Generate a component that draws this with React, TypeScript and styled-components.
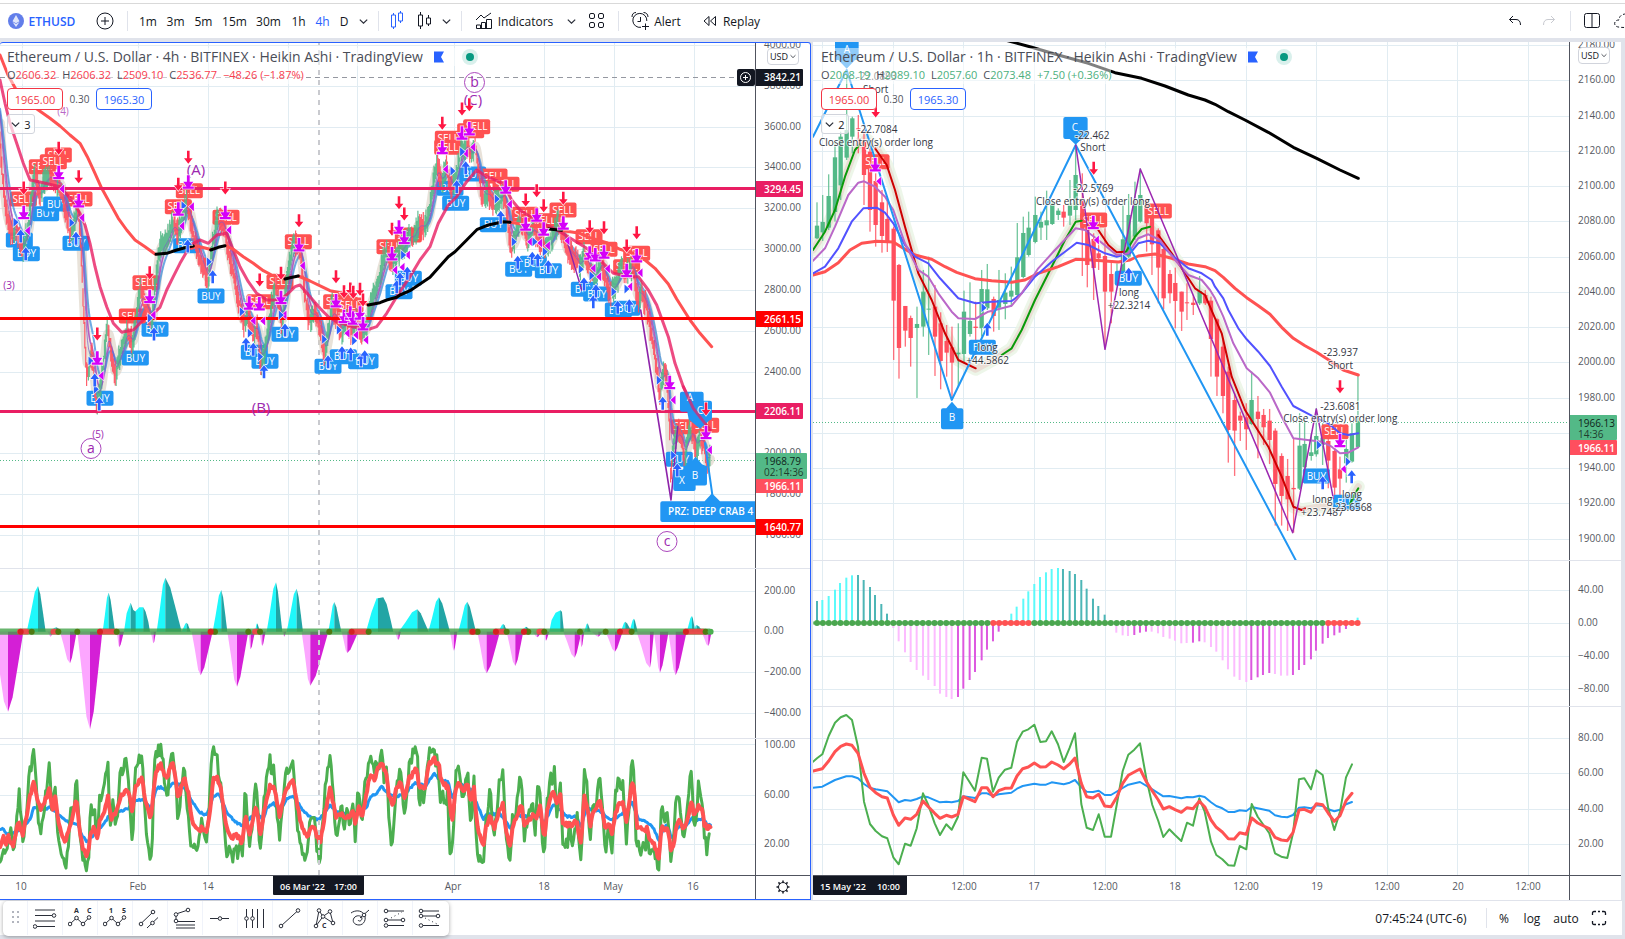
import React from 'react';
import styled, { createGlobalStyle, css } from 'styled-components';

const font = '"Open Sans", "Noto Sans", sans-serif';

const GlobalStyle = createGlobalStyle`
  * { box-sizing: border-box; }
  body { margin: 0; background: #e0e3eb; font-family: ${font}; color: #131722; overflow: hidden; }
  button { font: inherit; color: inherit; border: 0; padding: 0; background: none; cursor: pointer; }
`;

/* ---------- page frame ---------- */

const Page = styled.div`
  display: flex;
  flex-direction: column;
  min-height: 100vh;
`;
const TopBar = styled.header`
  display: flex;
  align-items: center;
  height: 38px;
  padding-top: 4px;
  background: linear-gradient(#fff 3px, #d9d9d9 3px, #d9d9d9 4px, #fff 4px);
  font-size: 12px;
  overflow: hidden;
`;
const Tool = styled.button<{ $w: number; $active?: boolean; $strong?: boolean }>`
  display: flex;
  align-items: center;
  justify-content: center;
  flex: none;
  width: ${p => p.$w}px;
  height: 32px;
  white-space: nowrap;
  color: ${p => (p.$active ? '#2962ff' : '#131722')};
  font-weight: ${p => (p.$strong ? 600 : 400)};
  gap: 5px;
`;
const Divider = styled.span`
  flex: none;
  width: 1px;
  height: 20px;
  background: #e0e3eb;
`;
const Spacer = styled.span`
  flex: 1;
`;
const History = styled.span`
  display: flex;
  padding-right: 4px;
`;
const Workspace = styled.main`
  display: grid;
  grid-template-columns: 811fr 808fr;
  gap: 2px;
  flex: 1;
  padding: 4px 4px 0 0;
  min-height: 0;
`;
const ChartPanel = styled.section<{ $selected?: boolean }>`
  position: relative;
  display: flex;
  flex-direction: column;
  min-width: 0;
  background: #fff;
  overflow: hidden;
  ${p => p.$selected && css`
    border: 1px solid #2962ff;
    border-left: 0;
    border-radius: 3px 3px 0 0;
  `}
`;
const PaneRow = styled.div<{ $grow: number; $last?: boolean }>`
  display: flex;
  flex: ${p => p.$grow} ${p => p.$grow} 0;
  min-height: 0;
  border-bottom: ${p => (p.$last ? '0' : '1px solid #e0e3eb')};
`;
const TimeRow = styled.div<{ $h: number }>`
  display: flex;
  flex: none;
  height: ${p => p.$h}px;
  border-top: 1px solid #50535e;
`;
const Plot = styled.svg`
  display: block;
  flex: 1;
  min-width: 0;
  height: 100%;
`;
const Axis = styled.svg<{ $w: number }>`
  display: block;
  flex: none;
  width: ${p => p.$w}px;
  height: 100%;
  border-left: 1px solid #50535e;
`;
const AxisText = styled.text`
  font-family: ${font};
  font-size: 10px;
  fill: #555861;
`;
const TagText = styled.text<{ $small?: boolean; $light?: boolean }>`
  font-family: ${font};
  font-size: ${p => (p.$small ? 9 : 10)}px;
  font-weight: ${p => (p.$light ? 400 : 600)};
`;
const BadgeText = styled.text`
  font-family: ${font};
  font-size: 10px;
  fill: #fff;
  text-anchor: middle;
`;
const ZoneText = styled.text`
  font-family: ${font};
  font-size: 10px;
  font-weight: 600;
  fill: #fff;
`;
const NoteText = styled.text`
  font-family: ${font};
  font-size: 10px;
  fill: #33363f;
  text-anchor: middle;
  stroke: #ffffffb0;
  stroke-width: 2px;
  paint-order: stroke;
`;
const WaveText = styled.text<{ $size: number }>`
  font-family: ${font};
  font-size: ${p => p.$size}px;
  fill: #9c27b0;
  text-anchor: middle;
`;

/* ---------- legend over the chart ---------- */

const Legend = styled.div<{ $inset: number }>`
  position: absolute;
  top: ${p => p.$inset - 2}px;
  left: ${p => p.$inset}px;
  display: flex;
  flex-direction: column;
  align-items: flex-start;
`;
const LegendRow = styled.div`
  display: flex;
  align-items: center;
  height: 18px;
  background: #ffffff80;
  white-space: nowrap;
`;
const Title = styled.h2`
  margin: 0;
  font-size: 14px;
  font-weight: 400;
  line-height: 18px;
  color: #4a4d57;
`;
const Values = styled.p<{ $up?: boolean }>`
  display: flex;
  gap: 6px;
  margin: 0;
  font-size: 11px;
  line-height: 16px;
  color: ${p => (p.$up ? '#4caf7d' : '#f7404f')};
  b { font-weight: 400; color: #4a4d57; }
`;
const Quotes = styled.div`
  display: flex;
  align-items: center;
  height: 22px;
  margin-top: 4px;
  font-size: 10px;
  color: #50535e;
`;
const Quote = styled.button<{ $buy?: boolean }>`
  width: 56px;
  height: 22px;
  border: 1px solid currentColor;
  border-radius: 4px;
  background: #fff;
  font-size: 11px;
  color: ${p => (p.$buy ? '#2962ff' : '#f23645')};
`;
const Spread = styled.span`
  width: 33px;
  text-align: center;
`;
const Collapse = styled.button`
  display: flex;
  align-items: center;
  justify-content: center;
  gap: 4px;
  width: 28px;
  height: 20px;
  margin-top: 4px;
  border: 1px solid #d1d4dc;
  border-radius: 3px;
  background: #ffffffb0;
  font-size: 11px;
`;
const Currency = styled.button`
  position: absolute;
  top: 5px;
  right: 11px;
  display: flex;
  align-items: center;
  justify-content: center;
  gap: 2px;
  width: 32px;
  height: 17px;
  border: 1px solid #d1d4dc;
  border-radius: 4px;
  background: #fff;
  font-size: 9px;
`;
const FlagSlot = styled.span`
  display: flex;
  align-items: center;
  gap: 18px;
  margin-left: 11px;
`;

/* ---------- footer ---------- */

const Footer = styled.footer`
  display: flex;
  align-items: center;
  justify-content: space-between;
  height: 35px;
  margin: 0 3px 4px 0;
  padding: 0 13px 0 3px;
  background: #fff;
  border-top: 1px solid #e0e3eb;
  font-size: 12px;
`;
const DrawingBar = styled.div`
  display: flex;
  align-items: center;
  height: 35px;
  padding: 0 2px 0 1px;
  background: #fff;
  border-radius: 5px;
  box-shadow: 0 1px 4px #00000059;
`;
const Grip = styled.span`
  display: flex;
  justify-content: center;
  width: 23px;
`;
const DrawTool = styled.button`
  display: flex;
  align-items: center;
  justify-content: center;
  width: 35px;
  height: 34px;
  border-left: 1px solid #f0f3fa;
`;
const Status = styled.div`
  display: flex;
  align-items: center;
`;

/* ---------- geometry helpers ---------- */

type Pt = [number, number];

// Traces are kept on a grid of three units to the pixel, from the origin of their section.
const trace = (ox: number, oy: number, data: string): Pt[] =>
  data.trim().split(/\s+/).map(s => {
    const [x, y] = s.split(',').map(Number);
    return [ox + x / 3, oy + y / 3] as Pt;
  });
const A = (d: string) => trace(0, 100, d);
const B = (d: string) => trace(400, 60, d);
const C = (d: string) => trace(805, 40, d);
const D = (d: string) => trace(1215, 40, d);
const E = (d: string) => trace(0, 560, d);
const F = (d: string) => trace(400, 560, d);
const G = (d: string) => trace(805, 550, d);
const H = (d: string) => trace(1215, 550, d);

const str = (p: Pt[]) => p.map(q => q[0].toFixed(1) + ',' + q[1].toFixed(1)).join(' ');

const Line = ({ p, c, w, o = 1 }: { p: Pt[]; c: string; w: number; o?: number }) => (
  <polyline points={str(p)} fill="none" stroke={c} strokeWidth={w} opacity={o} strokeLinejoin="round" strokeLinecap="round" />
);

const Badges = ({ at, kind }: { at: Pt[]; kind: 'SELL' | 'BUY' }) => (
  <>
    {at.map(([x, y], i) => (
      <g key={i}>
        <rect x={x - 13.5} y={y - 7.5} width={27} height={15} rx={2} fill={kind === 'SELL' ? '#ff5252' : '#2196f3'} />
        <BadgeText x={x} y={y + 3.5}>{kind}</BadgeText>
      </g>
    ))}
  </>
);

const shapes = {
  down: { d: 'M-1.300-6.500H1.300V1H4.300L0 6.500L-4.300 1H-1.300Z', c: '#ff1744' },
  exit: { d: 'M-1.400-7H1.400V-.5H5L1.800 4.200H5.500V6.500H-5.500V4.200H-1.800L-5-.5H-1.400Z', c: '#d500f9' },
  up: { d: 'M-1.300 6.500H1.300V-1H4.300L0-6.500L-4.300-1H-1.300Z', c: '#2962ff' },
  left: { d: 'M-2.800 0L2.200-4.500V4.500Z', c: '#d500f9' },
  right: { d: 'M2.800 0L-2.200-4.500V4.500Z', c: '#2962ff' },
};
const Marks = ({ at, kind }: { at: Pt[]; kind: keyof typeof shapes }) => (
  <>
    {at.map(([x, y], i) => (
      <path key={i} d={shapes[kind].d} transform={`translate(${x.toFixed(1)} ${y.toFixed(1)})`} fill={shapes[kind].c} stroke="#fff" strokeWidth={1.4} paintOrder="stroke" strokeOpacity={0.85} />
    ))}
  </>
);

const Grid = ({ xs, ys }: { xs: number[]; ys: number[] }) => (
  <g stroke="#e1ecf2" strokeWidth={1}>
    {xs.map(x => <line key={'x' + x} x1={x + 0.5} x2={x + 0.5} y1={0} y2={2000} />)}
    {ys.map(y => <line key={'y' + y} x1={0} x2={3000} y1={y + 0.5} y2={y + 0.5} />)}
  </g>
);

const Labels = ({ x, items }: { x: number; items: [string, number][] }) => (
  <>{items.map(([t, y]) => <AxisText key={t} x={x} y={Math.round(y) + 3}>{t}</AxisText>)}</>
);

const Tag = ({ x, y, w = 48, h = 16, fill, text, ink = '#fff', sub }: { x: number; y: number; w?: number; h?: number; fill: string; text: string; ink?: string; sub?: string }) => (
  <g>
    <rect x={x} y={y} width={w} height={h} rx={1} fill={fill} />
    <TagText x={x + 9} y={y + 12} fill={ink} $light={ink !== '#fff'}>{text}</TagText>
    {sub && <TagText x={x + 9} y={y + 23} fill="#1f3d2e" $light>{sub}</TagText>}
  </g>
);

/* ---------- 4h chart data ---------- */

const L_XS = [22, 138, 208, 288, 357, 454, 544, 614, 694];
const L_PRICES: [string, number][] = Array.from({ length: 13 }, (_, i) => [(4000 - i * 200) + '.00', 45 + i * 40.83]);

const price4h: Pt[] = [
  ...A('0,130 10,260 20,350 35,400 50,390 70,450 85,380 95,280 105,210 120,280 135,240 150,225 165,250 180,250 195,330 210,390 225,370 235,310 243,450 250,620 260,820 275,760 290,920 305,840 322,680 335,760 345,830 358,770 380,690 398,730 420,570 440,620 455,670 465,560 480,440 500,420 520,370 535,400 550,340 562,300 575,380 590,450 605,490 625,540 640,420 652,350 670,370 685,450 700,520 715,600 730,670 745,640 760,700 772,680 782,800 800,720 815,610 830,560 845,680 860,540 880,430 900,440 915,580 925,660 945,640 960,680 975,770 985,700 995,610 1010,660 1025,700 1040,650 1055,700 1070,660 1085,710 1100,680 1115,600 1130,570 1145,500 1160,450 1178,490 1195,460 1215,430 1235,400'),
  ...B('40,535 55,490 75,500 88,460 100,370 112,310 125,370 140,320 155,390 168,360 180,280 200,250 215,290 225,250 235,330 248,420 265,400 280,430 300,410 315,400 325,500 335,570 350,520 365,480 380,540 400,500 420,550 435,570 455,540 475,480 488,520 500,570 520,590 540,620 555,580 575,650 590,640 605,600 620,670 632,700 650,670 665,620 680,640 700,610 712,720 725,700 740,740 755,830 770,920 780,1000 790,930 800,960 808,1060 812,1250 822,1150 835,1110 848,1150 855,1200 865,1120 878,1110 888,1170 900,1130 912,1150 922,1220 930,1190'),
];

const hash = (n: number) => { const s = Math.sin(n * 127.1 + 11.7) * 43758.5453; return s - Math.floor(s); };
const sample = (p: Pt[], step: number): Pt[] => {
  const out: Pt[] = [];
  let k = 0;
  for (let x = p[0][0]; x < p[p.length - 1][0]; x += step) {
    while (k < p.length - 2 && p[k + 1][0] < x) k++;
    const t = (x - p[k][0]) / (p[k + 1][0] - p[k][0]);
    out.push([x, p[k][1] + t * (p[k + 1][1] - p[k][1])]);
  }
  return out;
};
const jitter = (p: Pt[], amp: number): Pt[] => sample(p, 1.2).map(([x, y], i) => [x, y + (hash(i + 40) - 0.5) * amp]);
const bars4h = sample(price4h, 0.893);
const ema = (p: Pt[], n: number): Pt[] => { let v = p[0][1] - 40; return p.map(([x, y]) => { v += (y - v) * (2 / (n + 1)); return [x, v] as Pt; }); };
const sticks = (red: boolean) => bars4h.map(([x, y], i) => {
  const next = bars4h[Math.min(i + 2, bars4h.length - 1)][1];
  const prev = bars4h[Math.max(i - 2, 0)][1];
  if ((next > prev) !== red) return '';
  const up = 4 + hash(i) * 11;
  const dn = 4 + hash(i + 900) * 11;
  return `M${x.toFixed(1)} ${(y - up).toFixed(1)}V${(y + dn).toFixed(1)}`;
}).join('');

const histUp = [
  '80,114,137,78', '150,168,185,202', '308,326,345,98', '470,496,545,53', '545,560,572,188', '638,664,682,90', '765,771,780,190', '800,828,847,67', '860,890,909,86', '985,1003,1024,126',
  '1196,1252,1286,148', '1285,1317,1350,112', '1375,1402,1428,125', '1495,1510,1522,192', '1568,1578,1592,200', '1753,1762,1772,190', '1862,1876,1895,185', '1888,1902,1913,176', '2060,2076,2086,168', '2080,2090,2110,195',
];
const histDown = [
  '-20,24,70,455', '143,152,158,230', '180,210,230,310', '232,270,307,508', '350,358,372,262', '452,461,468,250', '575,602,638,346', '682,711,745,380', '745,752,765,268', '778,787,797,258', '848,853,858,230', '905,931,985,377', '1025,1042,1075,279', '1185,1195,1203,240',
  '1350,1362,1372,272', '1432,1460,1500,340', '1520,1546,1570,318', '1598,1612,1625,232', '1632,1638,1648,242', '1690,1724,1745,293', '1738,1745,1753,262', '1775,1795,1808,230', '1817,1845,1868,275', '1910,1950,1962,323', '1962,1980,2006,338', '2005,2027,2060,346', '2105,2125,2135,258',
];
const Hump = ({ s, light, dark }: { s: string; light: string; dark: string }) => {
  const [a, m, b, y] = s.split(',').map(Number);
  const h = y - 215;
  return (
    <>
      <path fill={light} d={`M${a} 215L${a + (m - a) * 0.35} ${215 + h * 0.4}L${a + (m - a) * 0.72} ${215 + h * 0.87}L${m} ${y}V215Z`} />
      <path fill={dark} d={`M${m} 215V${y}L${m + (b - m) * 0.3} ${215 + h * 0.82}L${m + (b - m) * 0.68} ${215 + h * 0.38}L${b} 215Z`} />
    </>
  );
};

const rsi4hGreen = [
  ...E('0,915 8,880 20,890 32,780 42,880 58,695 70,855 80,760 88,640 95,620 102,578 108,660 115,790 122,820 130,770 138,690 148,622 155,740 165,672 172,800 182,870 190,885 197,912 205,860 212,755 222,760 229,610 236,790 245,870 255,915 265,910 272,745 280,750 284,728 290,860 298,725 305,720 312,690 323,590 330,815 338,725 345,795 353,780 360,650 368,635 376,602 385,640 390,760 398,850 405,640 412,605 426,590 432,700 440,840 450,890 456,870 462,620 470,580 482,567 490,600 495,680 502,715 510,600 520,582 528,680 535,800 542,700 551,605 557,690 565,780 572,840 580,850 585,870 593,888 600,800 610,780 618,868 626,770 632,620 640,575 650,568 658,670 666,700 672,800 680,880 688,850 697,908 705,850 715,885 722,860 728,880 735,690 742,770 750,865 757,800 768,635 775,790 781,885 790,750 800,650 810,600 815,650 822,630 830,740 838,840 845,790 852,680 858,612 868,640 878,607 885,700 895,830 905,860 912,880 920,908 928,800 936,760 945,800 952,880 960,905 968,770 980,640 991,590 998,660 1005,800 1012,830 1020,770 1023,715 1032,820 1040,740 1050,790 1060,730 1066,870 1073,690 1080,740 1088,800 1095,640 1105,630 1112,585 1122,640 1128,585 1136,640 1145,580 1152,650 1160,610 1165,740 1174,850 1182,800 1192,650'),
  ...F('4,625 12,785 20,700 28,620 38,580 52,570 58,745 65,680 70,720 78,650 85,600 92,565 101,556 106,620 113,590 120,740 128,690 135,740 143,690 148,860 155,885 160,800 168,640 176,612 187,738 194,680 202,618 212,815 222,660 230,860 240,900 250,918 258,780 265,740 271,685 280,830 290,760 298,660 309,635 318,850 330,908 338,760 345,790 352,715 362,638 374,840 384,770 396,720 406,812 412,690 419,660 426,820 433,895 440,740 452,632 458,680 463,632 469,770 481,650 488,840 495,850 502,855 510,800 516,845 522,840 532,770 543,905 553,640 560,650 569,850 580,740 588,745 594,690 601,655 610,800 617,870 626,770 636,885 645,720 655,638 662,690 668,670 679,850 687,740 696,600 703,640 708,860 716,830 722,880 728,840 736,870 741,790 750,900 758,870 765,890 776,925 785,735 793,800 800,730 808,850 814,905 825,760 835,688 842,760 852,835 862,740 873,620 880,770 887,805 895,675 905,710 912,810 921,882 923,830 931,822'),
];
const rsi4hRed = [
  ...E('0,865 10,830 18,860 25,830 40,855 55,785 68,825 80,770 90,710 102,668 112,720 123,750 135,720 148,690 158,750 165,705 175,780 185,820 195,842 205,815 215,790 229,705 238,810 250,870 262,885 272,825 282,795 292,840 300,780 312,765 323,705 333,775 345,765 357,735 365,705 385,690 397,755 407,680 426,652 435,720 452,775 462,680 470,630 482,615 500,655 510,620 520,610 535,720 551,650 565,700 575,770 583,800 595,815 610,800 620,820 632,735 640,660 650,645 665,700 675,780 685,810 695,840 705,820 715,830 725,855 736,770 750,825 768,730 781,830 795,740 810,680 825,690 840,775 855,690 878,662 890,720 900,780 912,810 922,835 936,795 950,825 960,850 975,760 991,680 1000,730 1008,770 1022,760 1035,775 1050,765 1060,755 1066,800 1075,740 1088,775 1098,700 1112,645 1125,660 1130,630 1145,615 1158,630 1166,700 1180,735 1190,680'),
  ...F('3,665 13,720 25,660 50,625 58,680 75,680 85,620 101,590 110,620 115,600 122,660 135,675 145,680 156,790 165,700 176,665 188,700 201,665 212,730 222,685 230,780 240,830 250,860 258,800 271,770 282,805 298,750 309,730 318,820 330,860 340,790 352,770 363,730 374,795 390,775 405,760 410,780 420,730 433,838 443,740 458,690 468,730 481,695 488,785 500,795 512,795 530,785 543,850 553,710 562,740 570,800 580,760 600,725 615,800 628,785 636,825 645,770 655,728 668,730 679,785 696,670 703,680 710,800 720,795 735,815 741,795 750,845 760,850 776,895 785,800 793,815 800,795 814,875 825,830 835,775 852,805 862,780 874,725 882,765 895,740 906,745 912,790 921,805 932,795'),
];
const rsi4hBlue = [
  ...E('0,810 8,805 20,825 60,810 90,780 102,742 125,750 150,742 185,770 210,790 232,790 245,825 262,845 280,825 310,795 325,770 350,760 385,745 410,720 430,720 452,745 470,685 482,682 500,690 520,668 550,680 575,720 595,755 620,765 640,710 655,700 680,755 700,780 725,798 750,775 770,760 790,780 800,745 820,730 840,755 860,715 880,710 905,745 925,768 955,780 991,735 1010,755 1060,765 1100,740 1112,710 1130,700 1145,680 1165,700 1190,710 1220,695'),
  ...F('25,690 45,670 80,675 101,640 120,660 145,665 156,715 175,670 212,690 235,740 250,780 258,765 300,760 330,805 352,765 374,770 419,765 433,790 458,735 485,750 500,770 530,770 543,800 560,745 600,755 636,780 660,765 680,755 696,725 715,775 741,785 760,805 776,840 800,790 815,835 835,800 860,795 875,775 895,780 910,775 921,795 932,793'),
];

const Crosshair = () => <line x1={319} x2={319} y1={0} y2={2000} stroke="#c9cacf" strokeWidth={2} strokeDasharray="5 5" />;

const Circled = ({ at, t }: { at: Pt; t: string }) => (
  <g>
    <circle cx={at[0]} cy={at[1]} r={10} fill="none" stroke="#ab47bc" />
    <WaveText $size={14} x={at[0]} y={at[1] + 4}>{t}</WaveText>
  </g>
);

const Price4h = () => (
  <g transform="translate(0 -43)">
    <Grid xs={L_XS} ys={L_PRICES.map(p => Math.round(p[1]))} />
    <Crosshair />
    <line x1={0} x2={737} y1={77.5} y2={77.5} stroke="#9598a1" strokeDasharray="5 4" />
    <line x1={0} x2={3000} y1={460.5} y2={460.5} stroke="#53b987" strokeDasharray="1 2" />
    <Line p={ema(bars4h, 3)} c="#d8cfbf" w={10} o={0.6} />
    <Badges kind="BUY" at={[
      ...A('58,420 79,461 137,341 170,312 228,430 300,895 406,774 465,688 633,588 560,437 763,757 795,784 855,703 984,799 1030,770 1085,785 1095,783 1197,575 1225,535'),
      ...B('150,385 167,430 218,342 280,494 356,628 400,610 445,632 553,688 590,702 655,750 680,745 838,1198'),
    ]} />
    <Badges kind="SELL" at={[
      ...A('127,200 175,165 160,185 70,297 237,297 535,320 568,272 678,352 895,425 438,548 397,648 780,605 840,545 1010,605 1050,615 1170,440 1225,405'),
      ...B('145,235 143,262 212,212 230,200 282,348 318,373 375,463 435,482 489,450 567,530 612,568 680,620 710,580 853,1100 917,1096'),
    ]} />
    <Line p={ema(bars4h, 9)} c="#ab47bc" w={1.6} o={0.85} />
    <Line p={ema(bars4h, 14)} c="#3f8fdc" w={2} o={0.75} />
    <path d={sticks(false)} stroke="#53b987" strokeWidth={1.2} opacity={0.9} />
    <path d={sticks(true)} stroke="#ff4f5e" strokeWidth={1.2} opacity={0.9} />
    <Line p={ema(bars4h, 6)} c="#7c5cc8" w={1} o={0.7} />
    <Line w={3} c="#e91e63" o={0.8} p={[
      ...A('0,-60 15,10 30,70 50,130 70,190 90,240 130,248 180,260 215,300 240,340 255,375 270,430 285,500 300,560 320,620 340,670 365,697 400,690 430,660 460,640 480,622 500,570 520,530 540,490 560,455 580,430 600,420 625,430 650,405 680,400 700,450 720,500 745,545 770,580 800,600 840,600 865,580 885,560 900,555 930,590 960,625 985,650 1010,665 1060,680 1100,690 1130,680 1160,640 1190,590 1210,560'),
      ...B('30,650 60,600 90,560 115,490 145,435 170,410 200,365 230,330 260,350 310,370 335,420 360,450 390,470 430,490 480,515 520,540 560,565 600,600 640,640 690,650 715,650 745,690 770,735 805,830 825,910 850,980 880,1045 915,1090 930,1110'),
    ]} />
    <Line w={3} c="#ff5252" p={A('0,-135 24,-75 60,-10 115,30 150,55 180,78 210,105 240,130 262,170 285,220 305,265 330,310 355,355 380,390 405,420 435,440 465,462')} />
    <Line w={3} c="#ff5252" p={A('575,445 590,438 630,448')} />
    <Line w={3} c="#ff5252" p={A('678,437 700,448 730,470 760,490 790,512 815,525 850,528')} />
    <Line w={3} c="#ff5252" p={A('895,528 930,543 965,560 990,572 1030,580 1060,590 1085,605 1105,615')} />
    <Line w={3} c="#ff5252" p={B('330,487 380,495 440,505')} />
    <Line w={3} c="#ff5252" p={B('490,512 540,520 570,533 620,548 660,568 700,580 735,600 765,625 805,672 830,717 870,780 900,820 935,860')} />
    <Line w={3} c="#000" p={A('468,463 500,460 530,450 560,442 580,438')} />
    <Line w={3} c="#000" p={A('632,450 655,442 675,437')} />
    <Line w={3} c="#000" p={A('855,537 870,533 895,528')} />
    <Line w={3} c="#000" p={[...A('1105,615 1140,608 1160,600 1190,592'), ...B('0,705 30,692 90,652 145,590 165,575 200,540 232,508 265,495 310,485 330,487')]} />
    <Line w={3} c="#000" p={B('445,507 485,511')} />
    <Line w={1.4} c="#8e24aa" p={B('502,545 545,690')} />
    <Line w={1.6} c="#8e24aa" p={B('722,750 813,1320 833,1100')} />
    {([[188.5, '#e91e63'], [318.5, '#ff0000'], [411.5, '#e91e63'], [526.5, '#ff0000']] as [number, string][]).map(([y, c]) => (
      <line key={y} x1={0} x2={3000} y1={y} y2={y} stroke={c} strokeWidth={3} />
    ))}
    <g fill="#2196f3" transform="translate(400 60) scale(.3333)">
      <path d="M846 995H905Q911 995 911 1001V1022H930Q936 1022 936 1028V1074Q936 1080 930 1080L900 1106L866 1078L862 1055H846Q840 1055 840 1049V1001Q840 995 846 995Z" />
      <path d="M826 1228H850V1219L868 1213L887 1190L906 1213L921 1219V1271Q921 1277 915 1277H887V1287Q887 1293 881 1293H826Q820 1293 820 1287V1234Z" />
      <path d="M787 1324H914L936 1300L960 1324H1200V1386H787Q781 1386 781 1380V1330Q781 1324 787 1324Z" />
    </g>
    <Line w={2} c="#2196f3" p={B('915,1150 937,1304')} />
    <BadgeText x={690} y={401}>A</BadgeText>
    <BadgeText x={700} y={414}>C</BadgeText>
    <BadgeText x={682} y={484}>X</BadgeText>
    <BadgeText x={695} y={479}>B</BadgeText>
    <ZoneText x={668} y={515}>PRZ: DEEP CRAB 4</ZoneText>
    <Line w={3} c="#e91e63" o={0.7} p={B('850,980 880,1045 915,1090 930,1110')} />
    <WaveText $size={10} opacity={0.7} x={63} y={115}>(4)</WaveText>
    <WaveText $size={10} x={9} y={289}>(3)</WaveText>
    <WaveText $size={10} x={98} y={438}>(5)</WaveText>
    <WaveText $size={15} x={196} y={175}>(A)</WaveText>
    <WaveText $size={15} x={261} y={413}>(B)</WaveText>
    <WaveText $size={15} x={473} y={105}>(C)</WaveText>
    <Circled at={[91, 448.5]} t="a" />
    <Circled at={[474.5, 82.5]} t="b" />
    <Circled at={[667, 541.5]} t="c" />
    <Marks kind="down" at={[
      ...A('176,145 71,264 236,230 565,172 535,253 676,264 292,702 449,518 779,540 843,520 897,362 1008,530 1032,575 1051,567 1060,577 1080,568 1089,600 1197,308 1213,342 1176,388'),
      ...B('127,190 186,147 208,134 377,420 410,392 431,437 490,415 569,500 612,503 680,558 710,518 918,1047'),
    ]} />
    <Marks kind="left" at={[
      ...A('186,267 83,392 246,353 575,320 546,378 687,390 304,827 460,645 760,662 789,663 853,645 908,497 1042,700 1068,705 1098,720 1185,510 1207,502 1223,465'),
      ...B('137,328 197,280 219,262 329,433 390,545 420,549 443,557 502,542 580,625 597,650 623,626 690,680 721,638 820,1020 929,1170'),
    ]} />
    <Marks kind="right" at={[
      ...A('47,367 215,368 272,783 288,868 450,655 551,317 627,485 726,635 750,700 781,770 843,645 973,718 1017,690 1063,722 1210,465'),
      ...B('187,275 158,333 291,417 342,545 404,545 435,575 543,628 575,647 641,695 680,687 777,961 820,1186'),
    ]} />
    <Marks kind="up" at={[
      ...A('62,408 77,461 228,415 284,840 298,912 462,702 563,438 638,530 738,733 760,748 792,815 855,690 984,785 1026,758 1052,762 1083,780 1094,770 1190,560 1200,537 1222,520'),
      ...B('170,380 197,323 302,472 353,607 397,595 413,600 445,620 552,672 580,725 588,693 653,742 688,737 788,1030 832,1230'),
    ]} />
    <Marks kind="exit" at={[
      ...A('176,218 71,338 236,303 565,247 535,328 676,338 292,775 449,590 748,610 778,612 843,593 897,435 1008,603 1032,650 1051,640 1060,655 1080,640 1089,672 1176,462 1197,382 1213,413'),
      ...B('127,263 186,220 208,207 317,382 377,493 410,466 431,508 490,490 569,580 586,585 612,577 680,632 710,588 809,968 918,1118'),
    ]} />
    <rect x={737} y={69} width={18} height={17} rx={2} fill="#131722" />
    <path d="M740.500 77.500a5 5 0 1 0 10 0a5 5 0 1 0-10 0M743 77.500h5M745.500 75v5" stroke="#fff" fill="none" />
  </g>
);

const RED_RUNS = ['60,80', '160,172', '300,348', '632,640', '765,775', '1055,1100', '1415,1428', '1487,1515', '1572,1582', '1618,1630', '1860,1892', '2057,2112'];
const Momentum4h = () => (
  <g transform="translate(0 -569)">
    <Grid xs={L_XS} ys={[591, 631, 672, 713]} />
    <g transform="translate(0 560) scale(.3333)">
      {histUp.map(s => <Hump key={s} s={s} light="#1ff8fb" dark="#22a5a5" />)}
      <path fill="#1ff8fb" d="M372 215L380 160L392 128V215ZM405 215V155L418 142L430 142V215ZM1098 215L1115 155L1130 115H1136V215ZM1648 215L1655 180L1667 158L1682 151V215Z" />
      <path fill="#22a5a5" d="M392 215V128L400 150L407 155V215ZM430 215V142L437 155L445 185L450 215ZM1134 215V115L1150 112L1160 132L1172 180L1180 215ZM1681 215V151L1686 155L1692 215Z" />
      {histDown.map(s => <Hump key={s} s={s} light="#fca6ff" dark="#d41fd6" />)}
      <path d="M0 215H2130" stroke="#3fa045" strokeOpacity={0.78} strokeWidth={19} />
      {RED_RUNS.map(r => { const [a, b] = r.split(','); return <path key={r} d={`M${a} 215H${b}`} stroke="#ff3b45" strokeWidth={17} strokeLinecap="round" opacity={0.85} />; })}
      {[95, 175, 232, 350, 645, 745, 780, 988, 1106, 1433, 1520, 1585, 1633, 1740, 1817, 1895, 2117].map(x => <circle key={x} cx={x} cy={215} r={9} fill="#4f7a12" />)}
      {[62, 300, 632, 1055, 1418, 1488, 1572, 1860, 2058].map(x => <circle key={x} cx={x} cy={215} r={9} fill="#d32222" />)}
      <circle cx={2132} cy={215} r={9} fill="#4caf50" />
    </g>
    <Crosshair />
  </g>
);

const Rsi4h = () => (
  <g transform="translate(0 -739)">
    <Grid xs={L_XS} ys={[744, 795, 844]} />
    <Line p={jitter(rsi4hBlue, 2)} c="#2196f3" w={3} />
    <Line p={jitter(rsi4hGreen, 13)} c="#4caf50" w={3} />
    <Line p={jitter(rsi4hRed, 5)} c="#ff5252" w={4} />
    <Crosshair />
  </g>
);

/* ---------- 1h chart data ---------- */

const R_XS = [822, 893, 963, 1034, 1105, 1175, 1246, 1316, 1387, 1457, 1528];
const R_PRICES: [string, number][] = Array.from({ length: 15 }, (_, i) => [(2180 - i * 20) + '.00', 45 + i * 35.25]);

// x, high, body top, body bottom, low, colour
const candles1h = `36,487,557,595,597,g 53,465,546,577,603,g 71,403,468,563,570,g 90,305,352,516,545,g 107,275,290,436,480,g 125,95,270,353,360,g 142,230,235,290,340,g 160,225,265,268,340,r 177,270,305,405,495,r 195,325,335,510,575,r 212,400,423,555,620,r 231,450,487,588,638,r 247,475,537,606,636,r 266,560,566,782,960,r 282,672,675,924,1016,r 301,798,798,872,920,r 317,827,834,894,980,r 336,800,852,864,1074,g 355,690,755,860,890,g 371,650,806,809,945,g 390,735,800,890,1008,r 407,817,850,963,1048,r 425,855,903,938,1010,r 441,860,922,968,1078,r 460,850,938,943,1040,g 477,752,815,942,970,g 495,727,843,882,890,g 512,785,860,864,945,r 530,690,747,865,890,g 547,672,748,805,810,g 566,770,777,828,875,r 582,690,780,803,870,g 601,700,758,792,838,g 619,680,752,770,800,g 637,549,652,765,775,g 655,530,579,711,715,g 671,515,563,645,650,g 691,470,525,606,610,g 708,515,546,563,600,g 725,452,541,556,600,g 742,480,490,552,555,g 760,505,512,525,540,g 776,495,515,533,560,r 795,420,490,527,555,g 812,315,405,510,540,g 832,400,480,570,708,r 847,520,560,675,742,r 866,580,597,684,780,r 881,610,640,655,690,r 900,565,648,755,920,r 919,665,702,755,850,r 936,670,700,733,735,g 954,487,598,715,720,g 971,462,525,650,655,g 990,425,490,590,600,g 1006,385,465,545,548,g 1025,480,500,550,635,r 1041,520,530,613,705,r 1060,565,571,683,790,r 1076,605,627,775,808,r 1095,690,702,760,790,r 1111,683,729,783,865,r 1130,755,755,815,873,r 1146,730,787,790,840,r 1165,765,788,795,825,r 1184,708,753,790,795,g 1201,750,765,790,795,r 1218,770,782,897,1010,r 1236,835,838,1010,1068,r 1254,900,920,1068,1120,r 1270,980,995,1170,1268,r 1289,1060,1080,1172,1308,r 1306,1115,1127,1142,1203,r 1324,1090,1132,1168,1230,r 1340,995,1080,1152,1155,g 1359,1068,1115,1137,1255,r 1376,1107,1125,1162,1215,r 1394,1107,1142,1200,1272,r 1411,1165,1172,1332,1457,r 1430,1240,1248,1368,1457,r 1448,1257,1308,1378,1473,r 1466,1197,1344,1348,1478,r 1484,1120,1217,1346,1350,g 1499,1140,1212,1282,1330,g 1519,1180,1237,1248,1262,g 1534,1105,1188,1243,1250,g 1553,1150,1193,1215,1275,g 1570,1180,1203,1262,1345,r 1589,1225,1233,1343,1380,r 1605,1250,1288,1316,1372,r 1624,1200,1227,1270,1328,g 1641,1150,1180,1265,1268,g 1659,1008,1143,1221,1223,g`
  .split(' ').map(s => s.split(','));

const bars1h = 't36,153 c52,150 c71,138 c90,119 c105,99 c124,83 c141,76 t159,75 t176,90 t195,111 t210,135 t229,162 t246,191 p265,234 p281,274 p300,307 p317,336 p335,360 p354,377 p370,390 p389,408 p405,431 p424,441 p440,447 m459,441 m475,416 m494,390 m510,366 m530,331 m546,299 m564,274 m581,245 c619,191 c635,170 c655,146 c670,124 c688,102 c705,81 c723,67 c740,57 c759,54 t774,57 t794,63 t810,72 t829,90 t845,116 t864,146 t880,168 t899,194 p934,248 p953,256 p969,258 m988,255 m1005,248 m1023,245 p1040,245 p1059,250 p1075,261 p1094,266 p1110,272 p1129,280 p1145,279 m1164,278 m1183,274 p1199,277 p1218,291 p1234,305 p1253,331 p1269,358 p1288,380 p1304,390 p1324,396 m1339,390 m1358,382 m1374,375 m1393,369 p1410,372 p1428,377 p1447,377 m1464,375 m1482,360 m1498,345 m1518,328 m1533,302 m1553,281 m1569,264 m1588,256 m1604,248 m1623,237 c1658,203'.split(' ');
const barInk: Record<string, string> = { t: '#4db6b6', c: '#5cfafa', p: '#fcbcff', m: '#dd58df' };

const maRuns: [string, Pt[]][] = [
  ['#0a9a0a', C('24,630 60,575 90,510 120,410 150,330 165,312')],
  ['#cc0000', C('210,325 245,375 270,450 300,560 340,700 380,780 420,880 460,960 512,985')],
  ['#0a9a0a', C('590,945 620,925 650,870 690,780 740,680 780,600 812,545 830,542')],
  ['#cc0000', C('880,570 910,615 935,637 960,635')],
  ['#0a9a0a', C('960,640 990,590 1010,567 1035,560')],
  ['#cc0000', [...C('1060,585 1100,640 1140,700 1170,745 1200,765 1228,830'), ...D('20,880 50,1010 90,1110 160,1220 200,1310 235,1400 260,1410 270,1405')]],
  ['#0a9a0a', D('405,1392 418,1365 430,1345')],
];
const band1h = [...C('24,630 60,575 90,510 120,410 150,330 180,295 215,325 245,375 270,450 300,560 340,700 380,780 420,880 460,960 512,988 590,945 620,925 650,870 690,780 740,680 780,600 812,545 850,542 880,570 910,615 935,637 960,635 990,590 1010,567 1035,560 1060,585 1100,640 1140,700 1170,745 1200,765 1228,830'), ...D('20,880 50,1010 90,1110 160,1220 200,1310 235,1400 260,1410 330,1398 400,1392 430,1340')];

const NOTES: [string, Pt][] = [
  ['-22.0893', C('215,110')[0]], ['Short', C('212,150')[0]], ['-22.7084', C('217,270')[0]], ['Close entry(s) order long', C('213,309')[0]],
  ['-22.462', C('862,287')[0]], ['Short', C('864,325')[0]], ['-22.5769', C('865,446')[0]], ['Close entry(s) order long', C('864,485')[0]],
  ['long', C('548,925')[0]], ['+44.5862', C('548,962')[0]], ['long', C('972,760')[0]], ['+22.3214', C('972,798')[0]],
  ['-23.937', D('377,940')[0]], ['Short', D('376,978')[0]], ['-23.6081', D('376,1100')[0]], ['Close entry(s) order long', D('376,1138')[0]],
  ['long', D('322,1381')[0]], ['+23.7487', D('322,1420')[0]], ['long', D('411,1366')[0]], ['-23.6568', D('411,1403')[0]],
];

const Price1h = () => (
  <g transform="translate(-813 -42)">
    <Grid xs={R_XS} ys={R_PRICES.map(p => Math.round(p[1]))} />
    <line x1={813} x2={3000} y1={422.5} y2={422.5} stroke="#53b987" strokeDasharray="1 2" />
    <Line p={band1h} c="#e9f4e3" w={13} o={0.8} />
    <Line p={band1h} c="#e9d8d0" w={7} o={0.8} />
    <g transform="translate(805 40) scale(.3333)">
      {candles1h.map(([x, h, t, b, l, k]) => (
        <g key={x} fill={k === 'g' ? '#53b987' : '#ff4f5e'}>
          <rect x={+x - 2} y={+h} width={4} height={+l - +h} opacity={0.8} />
          <rect x={+x - 6.5} y={+t} width={13} height={Math.max(3, +b - +t)} />
        </g>
      ))}
    </g>
    <Badges kind="SELL" at={[...C('213,365 866,540 1060,513'), ...D('360,1175')]} />
    <Badges kind="BUY" at={[...C('532,922 970,715'), ...D('304,1308 395,1387')]} />
    {maRuns.map(([c, p], i) => <Line key={i} p={p} c={c} w={2} />)}
    <Line w={3} c="#ff5252" p={[...C('24,705 60,695 100,668 135,630 170,610 215,604 265,606 290,622 330,645 380,658 420,680 455,697 510,716 560,722 620,727 660,720 700,700 760,680 812,658 860,660 940,666 975,660 1000,648 1050,642 1100,655 1150,672 1200,680 1230,692'), ...D('25,712 60,745 95,773 130,797 165,823 200,862 235,895 270,917 305,937 345,962 385,990 430,1005')]} />
    <Line w={2} c="#5252ff" p={[...C('24,700 60,680 100,625 140,545 175,505 215,503 240,518 265,550 300,615 330,650 370,670 405,715 460,775 512,790 560,785 620,783 650,760 690,710 740,665 780,635 815,608 850,615 900,640 935,650 975,640 1000,610 1030,602 1065,610 1100,645 1150,685 1190,700 1220,720 1230,740'), ...D('25,775 40,810 70,865 95,898 130,935 165,978 200,1040 235,1098 300,1132 340,1150 375,1180 400,1185 430,1180')]} />
    <Line w={2} c="#ba68c8" p={[...C('24,662 60,625 90,560 130,465 160,428 177,424 210,440 240,470 265,510 300,610 340,690 370,710 400,760 440,815 460,835 510,837 550,815 620,797 650,760 700,685 750,630 812,565 840,570 880,600 935,645 970,640 1000,595 1030,583 1065,600 1110,660 1150,705 1190,720 1215,750 1230,775'), ...D('25,830 55,910 95,985 130,1015 165,1058 200,1130 235,1195 320,1205 350,1220 375,1240 400,1238 430,1222')]} />
    <Line w={3} c="#000" p={[...C('600,0 680,22 760,45 850,70 930,98 1010,115 1080,138 1150,165 1200,180'), ...D('0,193 40,215 90,240 160,277 235,322 305,355 375,390 430,415')]} />
    <Line w={2} c="#2196f3" p={[...C('24,290 125,90 440,1080 812,315'), ...D('0,1105 243,1562')]} />
    <Line w={1.5} c="#9c27b0" p={[...C('812,315 900,928 1006,387'), ...D('233,1478 304,1107 355,1375')]} />
    <g fill="#2196f3" transform="translate(805 40) scale(.3333)">
      <path d="M90 0H161V60H150L125 86L100 60H90Z" />
      <path d="M781 231H842Q848 231 848 237V291Q848 297 842 297H830L812 314L794 297H781Q775 297 775 291V237Q775 231 781 231Z" />
      <path d="M414 1105H424L441 1085L458 1105H469Q475 1105 475 1111V1162Q475 1168 469 1168H414Q408 1168 408 1162V1111Q408 1105 414 1105Z" />
    </g>
    <BadgeText x={847} y={53}>A</BadgeText>
    <BadgeText x={1075} y={131}>C</BadgeText>
    <BadgeText x={952} y={421}>B</BadgeText>
    {NOTES.map(([t, [x, y]], i) => <NoteText key={i} x={x} y={y + 3}>{t}</NoteText>)}
    <Marks kind="down" at={[...C('212,213 866,385'), ...D('375,1040')]} />
    <Marks kind="exit" at={[...C('211,375 865,548'), ...D('375,1202')]} />
    <Marks kind="up" at={[...C('547,868 971,703'), ...D('323,1328 410,1310')]} />
    <Marks kind="left" at={[...C('222,424 875,600'), ...D('386,1287')]} />
    <Marks kind="right" at={[...C('536,803 960,656'), ...D('312,1215 399,1265')]} />
  </g>
);

const Momentum1h = () => (
  <g transform="translate(-813 -561)">
    <Grid xs={R_XS} ys={[590, 623, 656, 689]} />
    <g transform="translate(805 550) scale(.3333)">
      {bars1h.map(s => {
        const [x, y] = s.slice(1).split(',').map(Number);
        return <rect key={s} x={x - 3} width={6} y={Math.min(y, 219)} height={Math.abs(y - 219)} fill={barInk[s[0]]} />;
      })}
      <path d="M24 219H1658" stroke="#7cc47f" strokeWidth={9} />
      <path d="M565 219H672M1570 219H1658" stroke="#ff8080" strokeWidth={9} />
      {Array.from({ length: 93 }, (_, i) => {
        const x = 36 + i * 17.63;
        const red = (x > 560 && x < 675) || x > 1565;
        return <circle key={i} cx={x} cy={219} r={9} fill={red ? '#ff5252' : '#4ba64f'} />;
      })}
    </g>
  </g>
);

const Rsi1h = () => (
  <g transform="translate(-813 -707)">
    <Grid xs={R_XS} ys={[738, 773, 809, 844]} />
    <Line w={2} c="#2196f3" p={[...G('24,713 52,710 90,690 124,679 141,679 159,685 177,702 195,714 212,718 247,724 281,757 300,750 317,752 335,747 354,739 370,742 405,757 424,755 440,757 459,753 475,739 510,744 530,730 546,730 564,738 581,733 619,728 636,716 653,708 688,701 706,704 723,704 740,697 776,703 794,698 810,690 829,712 845,725 864,726 881,722 899,735 918,735 953,714 970,704 1005,696 1042,718 1075,739 1093,738 1129,745 1146,741 1164,742 1183,737 1199,741 1218,757'), ...H('4,768 22,775 40,786 58,786 74,781 94,783 110,771 163,782 180,796 199,800 217,802 234,795 252,773 268,772 288,775 304,766 323,768 340,778 358,784 375,779 393,763 411,756')]} />
    <Line w={2} c="#4caf50" p={[...G('24,635 36,625 52,613 71,558 90,518 107,502 124,495 141,510 159,590 177,755 195,822 212,843 231,859 247,865 265,922 281,943 300,881 317,887 335,835 354,730 370,765 389,820 405,855 424,823 440,839 459,800 475,667 494,697 510,722 530,623 546,626 564,725 581,683 600,659 619,653 636,575 653,545 670,538 688,524 706,576 723,574 740,544 759,583 776,636 794,593 810,550 829,762 845,833 864,840 881,793 899,860 918,860 936,760 953,663 970,614 988,599 1005,580 1024,685 1042,765 1060,813 1075,861 1093,838 1110,855 1129,873 1146,818 1164,827 1183,745 1199,785 1218,875'), ...H('4,915 22,928 40,946 58,947 74,888 94,898 110,762 128,800 146,826 163,850 180,910 199,920 217,924 234,850 252,688 268,685 288,718 304,661 323,675 340,775 358,840 375,785 393,682 411,643')]} />
    <Line w={3} c="#ff5252" p={[...G('24,663 52,656 71,633 90,605 107,589 124,582 141,586 159,610 177,670 195,712 212,728 231,740 247,744 265,795 281,826 300,804 317,808 335,793 354,753 370,770 389,790 405,805 424,796 440,801 459,793 475,740 494,748 510,755 530,713 546,713 564,740 581,722 600,715 619,714 636,678 653,656 670,651 688,639 706,651 723,650 740,636 759,645 776,656 794,642 810,624 829,700 845,740 864,744 881,733 899,768 918,770 936,740 953,700 970,676 988,666 1005,657 1024,695 1042,723 1060,750 1075,777 1093,770 1110,779 1129,787 1146,773 1164,776 1183,754 1199,770 1218,810'), ...H('4,832 22,846 40,866 58,867 74,848 94,853 110,804 128,819 146,828 163,836 180,862 199,870 217,872 234,848 252,780 268,778 288,787 304,761 323,764 340,790 358,814 375,797 393,752 411,730')]} />
  </g>
);

/* ---------- icons ---------- */

const Ico = ({ w = 20, h = 20, c = 'currentColor', sw = 1, children }: { w?: number; h?: number; c?: string; sw?: number; children: React.ReactNode }) => (
  <svg width={w} height={h} viewBox={`0 0 ${w} ${h}`} fill="none" stroke={c} strokeWidth={sw} strokeLinejoin="round" aria-hidden>{children}</svg>
);
const Chevron = ({ w = 9 }: { w?: number }) => (
  <svg width={w} height={5} viewBox="0 0 9 5" fill="none" stroke="#2a2e39" strokeWidth={1.2} aria-hidden><path d="M.8.6L4.500 4.200L8.200.6" /></svg>
);
const Flag = () => <svg width={10} height={12} viewBox="0 0 10 12" aria-hidden><path d="M0 .5H10L7 6L10 11.500H0Z" fill="#2962ff" /></svg>;
const Live = () => <svg width={16} height={16} aria-hidden><circle cx={8} cy={8} r={8} fill="#d9f0ec" /><circle cx={8} cy={8} r={4} fill="#089981" /></svg>;

const GlyphText = styled.text`
  font-family: ${font};
  font-size: 7px;
  font-weight: 700;
  fill: #2a2e39;
  stroke: none;
`;
const Nodes = ({ at }: { at: [number, number][] }) => (
  <>{at.map(([x, y]) => <circle key={x + ',' + y} cx={x} cy={y} r={1.8} fill="#fff" />)}</>
);
const Zigzag = ({ a, b }: { a: string; b: string }) => (
  <>
    <path d="M2 18L8.500 12L15 18L21 11.500" />
    <Nodes at={[[2, 18], [8.5, 12], [15, 18], [21, 11.5]]} />
    <GlyphText x={6} y={7}>{a}</GlyphText>
    <GlyphText x={19} y={7}>{b}</GlyphText>
  </>
);

const drawIcons: [string, React.ReactNode][] = [
  ['Fib retracement', <><path d="M2 4H22M2 9.500H20M2 15H22M4 20.500H22" /><Nodes at={[[21, 9.5], [2, 20.5]]} /></>],
  ['ABC correction', <Zigzag a="A" b="C" />],
  ['Impulse wave', <Zigzag a="1" b="5" />],
  ['Parallel channel', <><path d="M3 17.500L15 6M9 22L20 11.500" /><Nodes at={[[3, 18], [15, 6], [14.5, 17]]} /></>],
  ['Fib extension', <><path d="M3 8L15 4M3 8V15M4 15.500H22M3 19H22M3 22H22" /><Nodes at={[[3, 8.5], [15, 4], [3, 15]]} /></>],
  ['Horizontal line', <><path d="M2 12.500H21" /><Nodes at={[[12, 12.5]]} /></>],
  ['Fib time zone', <><path d="M3.500 3V22M9.500 3V22M14.500 3V22M20.500 3V22" /><Nodes at={[[3.5, 12.5], [9.5, 12.5]]} /></>],
  ['Trend line', <><path d="M3 20L20 4.500" /><Nodes at={[[3, 20], [20, 4.5]]} /></>],
  ['Cypher pattern', <><path d="M3 20L6 4.500L10 10.500L17 5.500L20 17L10 10.500L3 20" /><Nodes at={[[3, 20], [6, 4.5], [10, 10.5], [17, 5.5], [20, 17]]} /><GlyphText x={9} y={22}>C</GlyphText></>],
  ['Fib spiral', <><path d="M3 7C7 4 13 4 16 8C19 13 16 19 11 19C6 19 4 15 6 12C8 9 13 9 14 12C14 15 11 16 10 14M12 12L21 4" /><Nodes at={[[16, 9]]} /></>],
  ['Long position', <><path d="M3 5H21M3 14H19M3 19.500H21" /><path d="M8 12L19 6" strokeDasharray="1 3" /><Nodes at={[[3, 5], [3, 14], [3, 19.5], [20, 14]]} /></>],
  ['Short position', <><path d="M3 5H21M3 10H19M3 19.500H21" /><path d="M7 12L19 18" strokeDasharray="1 3" /><Nodes at={[[3, 5], [3, 10], [3, 19.5], [20, 10]]} /></>],
];

/* ---------- sections ---------- */

const Toolbar = () => (
  <TopBar>
    <Tool $w={83} $active $strong>
      <svg width={16} height={16} aria-hidden><circle cx={8} cy={8} r={8} fill="#627eea" /><path d="M8 2L4.500 8.200L8 10.200L11.500 8.200ZM4.500 9L8 14L11.500 9L8 11Z" fill="#dfe5fb" /></svg>
      ETHUSD
    </Tool>
    <Tool $w={44} aria-label="Compare"><Ico><circle cx={10} cy={10} r={8} /><path d="M10 6V14M6 10H14" /></Ico></Tool>
    <Divider />
    <Tool $w={40}>1m</Tool><Tool $w={15}>3m</Tool><Tool $w={41}>5m</Tool><Tool $w={21}>15m</Tool><Tool $w={47}>30m</Tool><Tool $w={13}>1h</Tool><Tool $w={35} $active>4h</Tool><Tool $w={8}>D</Tool>
    <Tool $w={30} aria-label="More intervals"><Chevron /></Tool>
    <Divider />
    <Tool $w={38} $active aria-label="Chart style"><Ico><path d="M5.500 2V4M5.500 16V18M3.500 4H7.500V16H3.500ZM12.500 0V2M12.500 10V12M10.500 2H14.500V10H10.500Z" /></Ico></Tool>
    <Tool $w={14} aria-label="Candles"><Ico w={14}><path d="M3.500 1V4M3.500 15V18M1.500 4H5.500V15H1.500ZM11.500 4V7M11.500 13V15M9.500 7H13.500V13H9.500Z" /></Ico></Tool>
    <Tool $w={30} aria-label="More styles"><Chevron /></Tool>
    <Divider />
    <Tool $w={104}><Ico w={18}><path d="M1.500 17.500V14H5.500V17.500M6.500 17.500V11.500H10.500V17.500M11.500 17.500V8.500H16.500V17.500H1.500M1 9L6 4L9 7L16 2" /></Ico>Indicators</Tool>
    <Tool $w={10} aria-label="Favourite indicators"><Chevron /></Tool>
    <Tool $w={42} aria-label="Templates"><Ico w={18} h={18}><rect x={1.500} y={1.500} width={5} height={5} rx={1.500} /><rect x={10.500} y={1.500} width={5} height={5} rx={1.500} /><rect x={1.500} y={10.500} width={5} height={5} rx={1.500} /><rect x={10.500} y={10.500} width={5} height={5} rx={1.500} /></Ico></Tool>
    <Divider />
    <Tool $w={74}><Ico w={18}><path d="M15.800 10A7 7 0 1 0 10 16.300M9.500 6V10.500H6.500M1 6C1 3 2.500 1.500 5 1.500M12.500 1.500C15 1.500 17 3 17 6M14.500 12.500V19M11 15.500H18" /></Ico>Alert</Tool>
    <Tool $w={76}><Ico w={16} h={14}><path d="M7 2.500V11.500L2 7ZM13.500 2.500V11.500L8.500 7Z" /></Ico>Replay</Tool>
    <Spacer />
    <History>
      <Tool $w={34} aria-label="Undo"><Ico w={16} h={16}><path d="M6 3L2.500 6.500L6 10M2.500 6.500H9C12 6.500 13.500 8.500 13.500 12" /></Ico></Tool>
      <Tool $w={34} aria-label="Redo"><Ico w={16} h={16} c="#c8cad0"><path d="M10 3L13.500 6.500L10 10M13.500 6.500H7C4 6.500 2.500 8.500 2.500 12" /></Ico></Tool>
    </History>
    <Divider />
    <Tool $w={42} aria-label="Layout"><Ico w={18} h={18}><rect x={1.500} y={1.500} width={15} height={14} rx={2} /><path d="M9 2V15.500" /></Ico></Tool>
    <Tool $w={12} aria-label="Save"><Ico w={12} h={18}><path d="M13 2C8 2 6 5 6 8C2 8 1 11 2 13C3 15 6 15.500 13 15.500" strokeDasharray="3 2" /></Ico></Tool>
  </TopBar>
);

const ChartLegend = ({ inset, span, o, h, l, c, change, up, count }: { inset: number; span: string; o: string; h: string; l: string; c: string; change: string; up?: boolean; count: number }) => (
  <Legend $inset={inset}>
    <LegendRow>
      <Title>Ethereum / U.S. Dollar · {span} · BITFINEX · Heikin Ashi · TradingView</Title>
      <FlagSlot><Flag /><Live /></FlagSlot>
    </LegendRow>
    <LegendRow>
      <Values $up={up}>
        <span><b>O</b>{o}</span><span><b>H</b>{h}</span><span><b>L</b>{l}</span><span><b>C</b>{c}</span><span>{change}</span>
      </Values>
    </LegendRow>
    <Quotes>
      <Quote>1965.00</Quote><Spread>0.30</Spread><Quote $buy>1965.30</Quote>
    </Quotes>
    <Collapse><Chevron />{count}</Collapse>
  </Legend>
);

const Times = ({ items }: { items: [string, number][] }) => (
  <>{items.map(([t, x]) => <AxisText key={x} x={x} y={14} textAnchor="middle">{t}</AxisText>)}</>
);
const DateTag = ({ x, w, date, time }: { x: number; w: number; date: string; time: string }) => (
  <g>
    <rect x={x} y={-1} width={w} height={20} rx={1} fill="#131722" />
    <TagText $small x={x + 7} y={14} fill="#fff">{date}</TagText>
    <TagText $small x={x + w - 7} y={14} fill="#fff" textAnchor="end">{time}</TagText>
  </g>
);

const Chart4h = () => (
  <ChartPanel $selected>
    <PaneRow $grow={526}>
      <Plot><Price4h /></Plot>
      <Axis $w={55}>
        <g transform="translate(-756 -43)">
          <Labels x={764} items={L_PRICES.filter(p => p[0] !== '2200.00')} />
          <Tag x={755} y={69} h={17} fill="#131722" text="3842.21" />
          <Tag x={755} y={181} fill="#e91e63" text="3294.45" />
          <Tag x={755} y={311} fill="#ff0000" text="2661.15" />
          <Tag x={755} y={403} fill="#e91e63" text="2206.11" />
          <Tag x={755} y={478} h={15} fill="#ff4f5e" text="1966.11" />
          <Tag x={755} y={453} w={52} h={26} fill="#53b987" text="1968.79" ink="#10251a" sub="02:14:36" />
          <Tag x={755} y={519} fill="#ff0000" text="1640.77" />
        </g>
      </Axis>
    </PaneRow>
    <PaneRow $grow={170}>
      <Plot><Momentum4h /></Plot>
      <Axis $w={55}><g transform="translate(-756 -569)"><Labels x={764} items={[['200.00', 591], ['0.00', 631], ['−200.00', 672], ['−400.00', 713]]} /></g></Axis>
    </PaneRow>
    <PaneRow $grow={136} $last>
      <Plot><Rsi4h /></Plot>
      <Axis $w={55}><g transform="translate(-756 -739)"><Labels x={764} items={[['100.00', 745], ['60.00', 795], ['20.00', 844]]} /></g></Axis>
    </PaneRow>
    <TimeRow $h={24}>
      <Plot>
        <Times items={[['10', 21], ['Feb', 138], ['14', 208], ['Apr', 453], ['18', 544], ['May', 613], ['16', 693]]} />
        <DateTag x={273} w={91} date="06 Mar '22" time="17:00" />
      </Plot>
      <Axis $w={55}>
        <g transform="translate(27 11)" stroke="#131722" fill="none">
          <circle r={4.500} />
          {[0, 45, 90, 135, 180, 225, 270, 315].map(a => <path key={a} d="M0-4.500V-6.500" strokeWidth={1.500} transform={`rotate(${a})`} />)}
        </g>
      </Axis>
    </TimeRow>
    <ChartLegend inset={7} span="4h" o="2606.32" h="2606.32" l="2509.10" c="2536.77" change="−48.26 (−1.87%)" count={3} />
    <Currency>USD<Chevron w={6} /></Currency>
  </ChartPanel>
);

const Chart1h = () => (
  <ChartPanel>
    <PaneRow $grow={519}>
      <Plot><Price1h /></Plot>
      <Axis $w={52}>
        <g transform="translate(-1570 -42)">
          <Labels x={1578} items={R_PRICES.filter(p => p[0] !== '1960.00')} />
          <Tag x={1569} y={440} h={15} fill="#ff4f5e" text="1966.11" />
          <Tag x={1569} y={415} h={25} fill="#53b987" text="1966.13" ink="#10251a" sub="14:36" />
        </g>
      </Axis>
    </PaneRow>
    <PaneRow $grow={146}>
      <Plot><Momentum1h /></Plot>
      <Axis $w={52}><g transform="translate(-1570 -561)"><Labels x={1578} items={[['40.00', 590], ['0.00', 623], ['−40.00', 656], ['−80.00', 689]]} /></g></Axis>
    </PaneRow>
    <PaneRow $grow={168} $last>
      <Plot><Rsi1h /></Plot>
      <Axis $w={52}><g transform="translate(-1570 -707)"><Labels x={1578} items={[['80.00', 738], ['60.00', 773], ['40.00', 809], ['20.00', 844]]} /></g></Axis>
    </PaneRow>
    <TimeRow $h={25}>
      <Plot>
        <Times items={[['12:00', 151], ['17', 221], ['12:00', 292], ['18', 362], ['12:00', 433], ['19', 504], ['12:00', 574], ['20', 645], ['12:00', 715]]} />
        <DateTag x={0} w={94} date="15 May '22" time="10:00" />
      </Plot>
      <Axis $w={52} />
    </TimeRow>
    <ChartLegend inset={8} span="1h" o="2068.19" h="2089.10" l="2057.60" c="2073.48" change="+7.50 (+0.36%)" up count={2} />
    <Currency>USD<Chevron w={6} /></Currency>
  </ChartPanel>
);

export default function App() {
  return (
    <Page>
      <GlobalStyle />
      <Toolbar />
      <Workspace>
        <Chart4h />
        <Chart1h />
      </Workspace>
      <Footer>
        <DrawingBar>
          <Grip><svg width={8} height={14} fill="#b2b5be" aria-hidden>{[0, 5, 10].map(y => <g key={y}><rect y={y} width={2} height={2} /><rect x={5} y={y} width={2} height={2} /></g>)}</svg></Grip>
          {drawIcons.map(([name, art]) => (
            <DrawTool key={name} aria-label={name}><Ico w={24} h={24} c="#2a2e39">{art}</Ico></DrawTool>
          ))}
        </DrawingBar>
        <Status>
          <Tool $w={130}>07:45:24 (UTC-6)</Tool>
          <Divider />
          <Tool $w={34}>%</Tool>
          <Tool $w={22}>log</Tool>
          <Tool $w={46}>auto</Tool>
          <Tool $w={20} aria-label="Full screen"><Ico w={16} h={16}><path d="M1.500 5V3Q1.500 1.500 3 1.500H5M11 1.500H13Q14.500 1.500 14.500 3V5M14.500 11V13Q14.500 14.500 13 14.500H11M5 14.500H3Q1.500 14.500 1.500 13V11M7 1.500H9M7 14.500H9" strokeWidth={1.300} /></Ico></Tool>
        </Status>
      </Footer>
    </Page>
  );
}
